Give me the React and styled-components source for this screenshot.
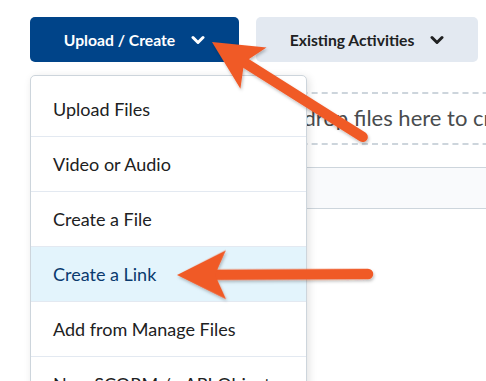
import React from 'react'
import styled, { createGlobalStyle } from 'styled-components'

const GlobalStyle = createGlobalStyle`
  html, body {
    margin: 0;
    padding: 0;
    background: #ffffff;
    overflow: hidden;
  }
  body {
    font-family: Lato, "Open Sans", sans-serif;
    color: #202122;
  }
`

const menuItems = [
  'Upload Files',
  'Video or Audio',
  'Create a File',
  'Create a Link',
  'Add from Manage Files',
  'New SCORM / xAPI Object',
]

const Chevron = ({ color }) => (
  <svg width="14" height="10" viewBox="0 0 14 10">
    <path d="M2 2.5 L7 7.5 L12 2.5" fill="none" stroke={color} strokeWidth="3" strokeLinecap="round" strokeLinejoin="round" />
  </svg>
)

const Arrow = ({ x, y, angle, length }) => (
  <g transform={`translate(${x} ${y}) rotate(${angle})`}>
    <line x1="34" y1="0" x2={length} y2="0" stroke="#f05a28" strokeWidth="10.5" strokeLinecap="round" />
    <polygon points="0,0 49,-24.5 38,0 49,24.5" fill="#f05a28" />
  </g>
)

const App = () => {
  return (
    <Page>
      <GlobalStyle />
      <Toolbar>
        <MenuAnchor>
          <ToolButton primary>
            Upload / Create
            <Chevron color="#ffffff" />
          </ToolButton>
          <Menu>
            {menuItems.map((item) => (
              <MenuItem key={item} active={item === 'Create a Link'}>
                {item}
              </MenuItem>
            ))}
          </Menu>
        </MenuAnchor>
        <ToolButton>
          Existing Activities
          <Chevron color="#202122" />
        </ToolButton>
      </Toolbar>
      <Content>
        <DropZone>Drag and drop files here to create and update topics</DropZone>
        <Bar />
      </Content>
      <Overlay width="486" height="381" viewBox="0 0 486 381">
        <defs>
          <filter id="shadow" x="-10%" y="-10%" width="120%" height="130%">
            <feDropShadow dx="1" dy="2" stdDeviation="1.5" floodColor="#000" floodOpacity="0.25" />
          </filter>
        </defs>
        <g filter="url(#shadow)">
          <Arrow x={212} y={42} angle={32.2} length={178} />
          <Arrow x={177} y={275} angle={-0.3} length={191} />
        </g>
      </Overlay>
    </Page>
  )
}

export default App

const Page = styled.div`
  position: relative;
  width: 486px;
  height: 381px;
  padding: 17px 0 0 30px;
  box-sizing: border-box;
  overflow: hidden;
`

const Toolbar = styled.div`
  display: flex;
  gap: 17px;
  position: relative;
  z-index: 2;
`

const MenuAnchor = styled.div`
  position: relative;
`

const ToolButton = styled.button`
  display: flex;
  align-items: center;
  justify-content: center;
  gap: 16px;
  width: ${(p) => (p.primary ? '209px' : '222px')};
  height: 45px;
  border: none;
  border-radius: 5px;
  background: ${(p) => (p.primary ? '#004489' : '#e3e9f1')};
  color: ${(p) => (p.primary ? '#ffffff' : '#202122')};
  font-family: Lato, sans-serif;
  font-weight: 700;
  font-size: 15.7px;
  padding: 0;
  cursor: pointer;
`

const Menu = styled.div`
  position: absolute;
  top: 58px;
  left: 0;
  width: 277px;
  padding-top: 6px;
  background: #ffffff;
  border: 1px solid #cdd5dc;
  border-radius: 5px;
  box-sizing: border-box;
  box-shadow: 2px 2px 8px rgba(0, 0, 0, 0.12);
`

const MenuItem = styled.div`
  height: 55px;
  display: flex;
  align-items: center;
  padding-left: 22px;
  font-size: 18px;
  color: ${(p) => (p.active ? '#0a3a6e' : '#202122')};
  background: ${(p) => (p.active ? '#e3f4fc' : 'transparent')};
  border-bottom: 1px solid #e3e9f1;
  box-sizing: border-box;
  white-space: nowrap;
`

const Content = styled.div`
  display: flex;
  flex-direction: column;
  gap: 22px;
  margin-top: 30px;
  width: 700px;
`

const DropZone = styled.div`
  height: 53px;
  display: flex;
  align-items: center;
  padding-left: 180px;
  padding-bottom: 2px;
  box-sizing: border-box;
  border-top: 2px dashed #cdd5dc;
  border-bottom: 2px dashed #cdd5dc;
  font-size: 22px;
  color: #494c4e;
  white-space: nowrap;
`

const Bar = styled.div`
  height: 42px;
  background: #f9fafc;
  border-top: 1px solid #cdd5dc;
  border-bottom: 1px solid #cdd5dc;
  box-sizing: border-box;
`

const Overlay = styled.svg`
  position: absolute;
  top: 0;
  left: 0;
  z-index: 5;
  pointer-events: none;
`
